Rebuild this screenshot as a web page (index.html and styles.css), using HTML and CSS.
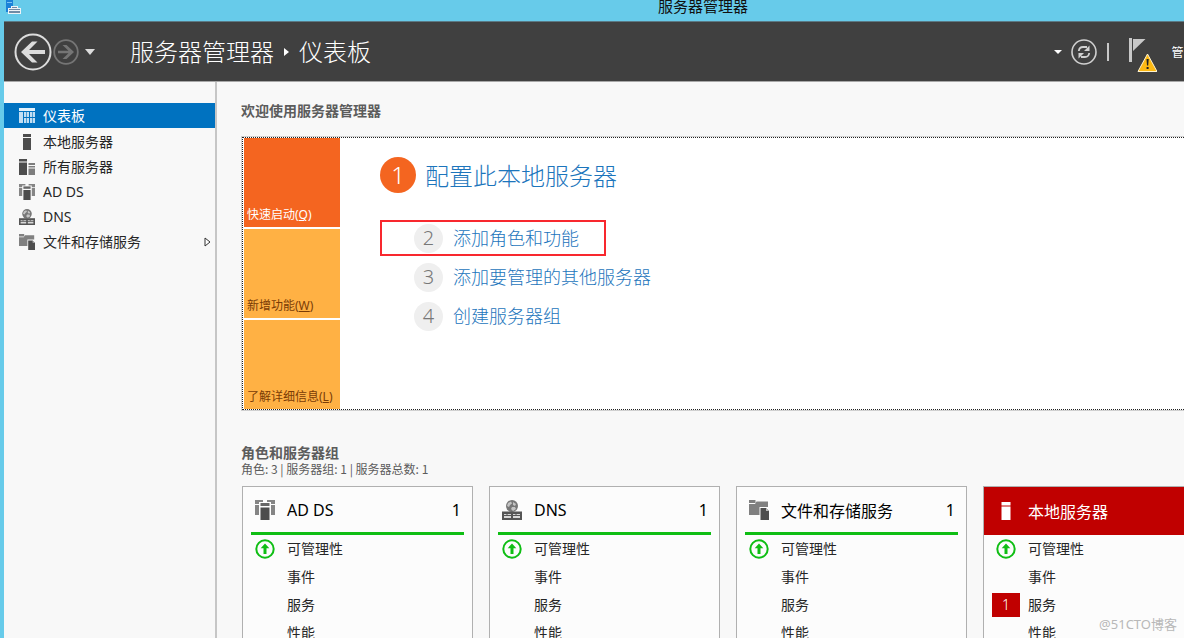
FILE: index.html
```html
<!DOCTYPE html>
<html lang="zh-CN">
<head>
<meta charset="utf-8">
<title>服务器管理器</title>
<link rel="stylesheet" href="styles.css">
</head>
<body>
<svg class="sprite" aria-hidden="true">
  <symbol id="i-dash" viewBox="0 0 16 15">
    <path fill="currentColor" d="M0 0h16v3H0z"/>
    <path fill="currentColor" opacity=".85" d="M0 4h4v11H0zM5 4h5v5H5zM11 4h5v5h-5zM5 10h5v5H5zM11 10h5v5h-5z"/>
    <path stroke="#0072c0" stroke-width=".6" d="M7.500 4v11M13.500 4v11"/>
  </symbol>
  <symbol id="i-server" viewBox="0 0 16 16">
    <path fill="currentColor" d="M4 0h8v3H4zM4 4h8v12H4z"/>
  </symbol>
  <symbol id="i-servers" viewBox="0 0 16 16">
    <path fill="#4d4d4d" d="M0 0h8v2.500H0zM0 3.500h8V16H0z"/>
    <path fill="#7d7d7d" d="M9.500 4H16v2H9.500zM9.500 7H16v1.500H9.500zM9.500 9.500H16V16H9.500z"/>
  </symbol>
  <symbol id="i-ad" viewBox="0 0 20 20">
    <path fill="#858585" d="M0 0h8v2H4v2H0zM12 0h8v4h-4V2h-4zM0 5h4v10H0zM16 5h4v10h-4z"/>
    <path fill="#666" d="M5.500 3h9v3h-9z"/>
    <path fill="#4d4d4d" d="M5.500 7.500h9V20h-9z"/>
  </symbol>
  <symbol id="i-dns" viewBox="0 0 20 20">
    <circle cx="10" cy="6" r="6" fill="#777"/>
    <path fill="#c4c4c4" d="M6 3l3-1.500 1 2L8 5 7 7 5 6zM11 2l3 2-1 2-2-1zM10 7l3 0 1 2-3 2-2-2z"/>
    <path fill="#555" d="M0 11.500h20V20H0z"/>
    <path fill="#d8d8d8" d="M2 14h2.500v1H2zM5.500 14H9v1H5.500zM11 14h2.500v1H11zM14.500 14H18v1h-3.500zM2 16h7v2H2zM11 16h7v2h-7z"/>
  </symbol>
  <symbol id="i-files" viewBox="0 0 20 20">
    <path fill="#808080" d="M0 0h6.500v3H0zM7.500 1.500H19V7h-8.500v8H0V4h6z"/>
    <path fill="#4d4d4d" d="M11.500 8H17l3 3v9h-8.500z"/>
    <path fill="#bbb" d="M17 8l3 3h-3z"/>
  </symbol>
  <symbol id="i-up" viewBox="0 0 20 20">
    <circle cx="10" cy="10" r="8.700" fill="none" stroke="#0fbe14" stroke-width="2"/>
    <path fill="#0fbe14" d="M10 4.500l4.300 4.700h-2.800V15h-3V9.200H5.700z"/>
  </symbol>
</svg>

<div class="titlebar">
  <svg class="app-icon" viewBox="0 0 16 14" aria-hidden="true">
    <path fill="#1b82d8" d="M0 0h7v12H0z"/>
    <path fill="#7cc4f5" d="M1 2h5v1H1z"/>
    <path fill="#eef3f7" d="M2 8h3V6h7v2h3v6H2z"/>
    <path fill="#6f8ba5" d="M3 9h11v1H3zM3 11h11v2H3zM6 7h5v1H6z"/>
  </svg>
  <span class="window-title">服务器管理器</span>
</div>

<div class="window">
  <header class="toolbar">
    <button class="icon-button back" aria-label="后退">
      <svg width="38" height="38" viewBox="0 0 38 38"><circle cx="19" cy="19" r="17.500" fill="none" stroke="#dcdcdc" stroke-width="2"/><path fill="#dcdcdc" d="M7 19L18 8.500h5.500L15 17h16v4H15l8.500 8.500H18z"/></svg>
    </button>
    <button class="icon-button" aria-label="前进">
      <svg width="26" height="26" viewBox="0 0 26 26"><circle cx="13" cy="13" r="11.800" fill="none" stroke="#757575" stroke-width="1.800"/><path fill="#757575" d="M21 13l-7.500 7h-4l6-5.800H5v-2.400h10.500L9.500 6h4z"/></svg>
    </button>
    <button class="icon-button history" aria-label="历史记录">
      <svg width="10" height="6" viewBox="0 0 10 6"><path fill="#dcdcdc" d="M0 0h10L5 6z"/></svg>
    </button>
    <nav class="crumbs" aria-label="位置">
      <span>服务器管理器</span>
      <svg width="5" height="8" viewBox="0 0 5 8" aria-hidden="true"><path fill="#fff" d="M0 0l5 4-5 4z"/></svg>
      <span>仪表板</span>
    </nav>
    <div class="tools">
      <button class="icon-button" aria-label="更多">
        <svg width="8" height="4" viewBox="0 0 8 4"><path fill="#fff" d="M0 0h8L4 4z"/></svg>
      </button>
      <button class="icon-button refresh" aria-label="刷新">
        <svg width="26" height="26" viewBox="0 0 26 26"><circle cx="13" cy="13" r="12" fill="none" stroke="#d0d0d0" stroke-width="1.600"/><path fill="none" stroke="#d0d0d0" stroke-width="1.800" d="M7.800 12c.3-2.600 2-4 4.200-4h4M18.200 14c-.3 2.600-2 4-4.200 4h-4"/><path fill="#d0d0d0" d="M18.500 6.500V12H13zM7.500 19.500V14H13z"/></svg>
      </button>
      <span class="divider"></span>
      <button class="icon-button flag" aria-label="通知">
        <svg width="28" height="36" viewBox="0 0 28 36"><path fill="#c8c8c8" d="M0 0h3v24H0zM4 1h12.500L4 13z"/><path fill="#fdb913" stroke="#fff3cf" stroke-width="1" stroke-linejoin="round" d="M18.500 16L28 33.500H9z"/><path fill="#222" d="M17.500 21h2.200l-.5 6.500h-1.200zM17.600 29h2v2h-2z"/></svg>
      </button>
      <button class="menu">管</button>
    </div>
  </header>

  <div class="body">
    <nav class="sidebar" aria-label="导航">
      <a class="nav-item active" href="#"><svg width="16" height="15"><use href="#i-dash"/></svg><span>仪表板</span></a>
      <a class="nav-item" href="#"><svg width="16" height="16"><use href="#i-server"/></svg><span>本地服务器</span></a>
      <a class="nav-item" href="#"><svg width="16" height="16"><use href="#i-servers"/></svg><span>所有服务器</span></a>
      <a class="nav-item" href="#"><svg width="16" height="16"><use href="#i-ad"/></svg><span>AD DS</span></a>
      <a class="nav-item" href="#"><svg width="16" height="16"><use href="#i-dns"/></svg><span>DNS</span></a>
      <a class="nav-item" href="#"><svg width="16" height="16"><use href="#i-files"/></svg><span>文件和存储服务</span>
        <svg class="expand" width="7" height="10" viewBox="0 0 7 10"><path fill="#fff" stroke="#333" d="M1 1l5 4-5 4z"/></svg></a>
    </nav>

    <main class="content">
      <h2>欢迎使用服务器管理器</h2>
      <section class="welcome">
        <div class="tabs">
          <button class="tab current">快速启动(<u>Q</u>)</button>
          <button class="tab">新增功能(<u>W</u>)</button>
          <button class="tab">了解详细信息(<u>L</u>)</button>
        </div>
        <div class="steps">
          <a class="lead" href="#"><span class="num">1</span><span class="label">配置此本地服务器</span></a>
          <a class="step marked" href="#"><span class="num">2</span><span class="label">添加角色和功能</span></a>
          <a class="step" href="#"><span class="num">3</span><span class="label">添加要管理的其他服务器</span></a>
          <a class="step" href="#"><span class="num">4</span><span class="label">创建服务器组</span></a>
        </div>
      </section>

      <h2 class="groups-title">角色和服务器组</h2>
      <p class="summary">角色: 3 | 服务器组: 1 | 服务器总数: 1</p>

      <div class="cards">
        <section class="card">
          <h3><svg width="20" height="20"><use href="#i-ad"/></svg><span>AD DS</span><span class="count">1</span></h3>
          <ul>
            <li><svg width="20" height="20"><use href="#i-up"/></svg><span>可管理性</span></li>
            <li><span>事件</span></li>
            <li><span>服务</span></li>
            <li><span>性能</span></li>
          </ul>
        </section>
        <section class="card">
          <h3><svg width="20" height="20"><use href="#i-dns"/></svg><span>DNS</span><span class="count">1</span></h3>
          <ul>
            <li><svg width="20" height="20"><use href="#i-up"/></svg><span>可管理性</span></li>
            <li><span>事件</span></li>
            <li><span>服务</span></li>
            <li><span>性能</span></li>
          </ul>
        </section>
        <section class="card">
          <h3><svg width="20" height="20"><use href="#i-files"/></svg><span>文件和存储服务</span><span class="count">1</span></h3>
          <ul>
            <li><svg width="20" height="20"><use href="#i-up"/></svg><span>可管理性</span></li>
            <li><span>事件</span></li>
            <li><span>服务</span></li>
            <li><span>性能</span></li>
          </ul>
        </section>
        <section class="card alert">
          <h3><svg width="18" height="18"><use href="#i-server"/></svg><span>本地服务器</span></h3>
          <ul>
            <li><svg width="20" height="20"><use href="#i-up"/></svg><span>可管理性</span></li>
            <li><span>事件</span></li>
            <li><b class="badge">1</b><span>服务</span></li>
            <li><span>性能</span></li>
          </ul>
        </section>
      </div>
    </main>
  </div>
</div>
<div class="watermark">@51CTO博客</div>
</body>
</html>
```

FILE: styles.css
```css
* {
  box-sizing: border-box;
}

body {
  margin: 0;
  height: 100vh;
  overflow: hidden;
  position: relative;
  display: flex;
  flex-direction: column;
  background: #f8f8f8;
  color: #262626;
  font-family: "Noto Sans", "Noto Sans CJK SC", sans-serif;
  font-size: 14px;
}

button {
  font: inherit;
  border: 0;
  padding: 0;
  background: none;
  color: inherit;
}

a {
  color: inherit;
  text-decoration: none;
}

svg {
  display: block;
  flex: none;
}

.sprite {
  position: absolute;
  width: 0;
  height: 0;
}

.titlebar {
  flex: none;
  height: 21px;
  display: grid;
  grid-template-columns: 1fr auto 1fr;
  align-items: start;
  padding: 0 0 0 222px;
  background: #67cbea;
  color: #111;
  font-size: 15px;
  line-height: 12px;
}

.app-icon {
  width: 16px;
  height: 14px;
  margin-left: -216px;
}

.window {
  flex: 1;
  min-height: 0;
  display: flex;
  flex-direction: column;
  border-left: 4px solid #67cbea;
}

.toolbar {
  flex: none;
  height: 61px;
  display: flex;
  align-items: center;
  padding-left: 10px;
  background: #404040;
  border-top: 1px solid #5b7a85;
  border-bottom: 1px solid #a8a8a8;
  color: #fff;
}

.icon-button {
  flex: none;
}

.back {
  margin-right: 1px;
}

.history {
  margin-left: 6px;
}

.crumbs {
  display: flex;
  align-items: center;
  gap: 10px;
  margin-left: 35px;
  font-size: 24px;
  font-weight: 300;
  line-height: 32px;
  white-space: nowrap;
}

.tools {
  display: flex;
  align-items: center;
  margin-left: auto;
}

.refresh {
  margin-left: 9px;
}

.divider {
  width: 2px;
  height: 18px;
  margin: 0 20px 0 10px;
  background: #c8c8c8;
}

.flag {
  padding-top: 8px;
}

.menu {
  width: 13px;
  margin-left: 14px;
  font-size: 12px;
}

.body {
  flex: 1;
  min-height: 0;
  display: flex;
}

.sidebar {
  flex: none;
  width: 213px;
  padding-top: 21px;
  border-right: 2px solid #c6c6c6;
}

.nav-item {
  display: flex;
  align-items: center;
  gap: 8px;
  height: 25px;
  padding: 0 4px 0 15px;
  color: #262626;
  line-height: 22px;
}

.nav-item > svg {
  color: #4d4d4d;
}

.nav-item.active {
  margin-bottom: 1px;
  background: #0072c0;
  color: #fff;
}

.nav-item.active > svg {
  color: #e3f1fb;
}

.nav-item .expand {
  margin-left: auto;
}

.content {
  flex: 1;
  min-width: 0;
  overflow: hidden;
  padding: 20px 0 0 24px;
}

h2 {
  margin: 0;
  color: #5c5c5c;
  font-size: 14px;
  font-weight: 700;
  line-height: 18px;
}

.welcome {
  display: flex;
  margin: 17px 0 0 1px;
  background: #fff;
  border: 1px dotted #222;
  border-right: 0;
  box-shadow: 0 0 0 1px #d0d0d0;
}

.tabs {
  display: grid;
  grid-template-rows: repeat(3, 89px);
  gap: 2px;
  width: 97px;
  padding-left: 1px;
}

.tab {
  display: flex;
  align-items: flex-end;
  padding: 0 0 4px 3px;
  background: #ffb144;
  color: #7a3c06;
  font-size: 12px;
  line-height: 17px;
  white-space: nowrap;
}

.tab.current {
  background: #f46520;
  color: #fff;
}

.steps {
  display: flex;
  flex-direction: column;
  align-items: flex-start;
  gap: 3px;
  padding: 19px 0 0 40px;
  color: #1c75bc;
  font-weight: 300;
}

.lead,
.step {
  display: flex;
  align-items: center;
  gap: 10px;
  height: 36px;
  font-size: 18px;
  white-space: nowrap;
}

.lead {
  gap: 9px;
  margin-bottom: 24px;
  font-size: 24px;
}

.label {
  padding-bottom: 2px;
}

.step {
  padding: 0 25px 0 32px;
  border: 2px solid transparent;
}

.step.marked {
  border-color: #f8282e;
}

.num {
  display: grid;
  place-items: center;
  width: 29px;
  height: 29px;
  border-radius: 50%;
  background: #efefef;
  color: #777;
  font-size: 20px;
  line-height: 28px;
}

.lead .num {
  width: 36px;
  height: 36px;
  background: #f46520;
  color: #fff;
  font-size: 24px;
}

.groups-title {
  margin-top: 34px;
}

.summary {
  margin: 0 0 10px;
  color: #5c5c5c;
  font-family: "Noto Sans CJK SC", sans-serif;
  font-size: 12px;
  line-height: 14px;
}

.cards {
  display: grid;
  grid-template-columns: repeat(4, 231px);
  gap: 16px;
  margin-left: 1px;
}

.card {
  height: 180px;
  border: 1px solid #b0b0b0;
  background: #fcfcfc;
}

.card h3 {
  display: grid;
  grid-template-columns: 28px 1fr auto;
  align-items: center;
  column-gap: 8px;
  height: 48px;
  margin: 0 8px;
  padding-right: 3px;
  border-bottom: 3px solid #0fbe14;
  color: #000;
  font-size: 16px;
  font-weight: 400;
}

.card h3 > svg,
.card li > svg {
  justify-self: center;
}

.card.alert h3 {
  margin: 0;
  padding: 0 8px;
  border-bottom-width: 0;
  background: #c00000;
  color: #fff;
}

.card ul {
  margin: 0;
  padding: 0 8px;
  list-style: none;
}

.card li {
  display: grid;
  grid-template-columns: 28px 1fr;
  align-items: center;
  column-gap: 8px;
  height: 28px;
}

.card li > span {
  grid-column: 2;
  padding-bottom: 2px;
}

.badge {
  height: 24px;
  background: #c00000;
  color: #fff;
  font-weight: 300;
  line-height: 24px;
  text-align: center;
}

.watermark {
  position: absolute;
  right: 7px;
  bottom: 5px;
  color: #b8b8b8;
  font-size: 13px;
  line-height: 18px;
}
```
